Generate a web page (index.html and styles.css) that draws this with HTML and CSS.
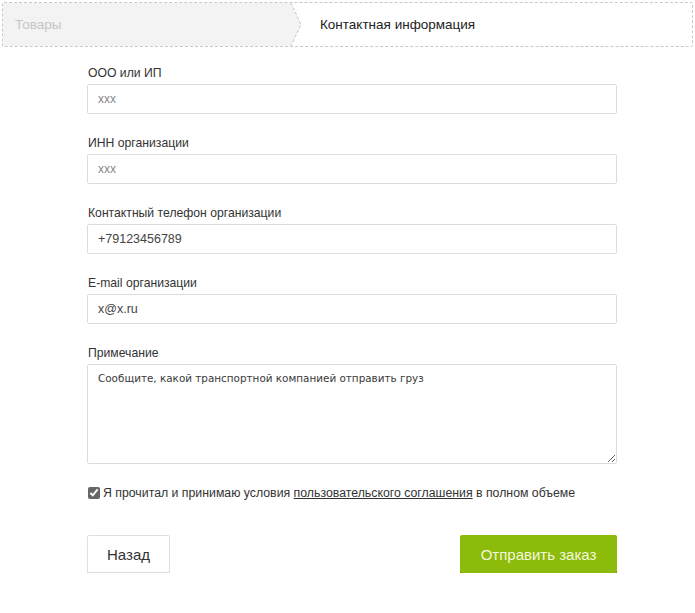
FILE: index.html
```html
<!DOCTYPE html>
<html lang="ru">
<head>
<meta charset="utf-8">
<link rel="stylesheet" href="styles.css">
</head>
<body>
<div class="steps">
  <div class="step step-done">Товары</div>
  <svg class="step-arrow" width="14" height="43" viewBox="0 0 14 43">
    <polygon points="0,0 2,0 12,21.5 2,43 0,43" fill="#f3f3f3"/>
    <polyline points="2,0 12,21.5 2,43" fill="none" stroke="#c4c4c4" stroke-width="1" stroke-dasharray="3,2"/>
  </svg>
  <div class="step step-active">Контактная информация</div>
</div>

<form class="form">
  <div class="field">
    <label class="label">ООО или ИП</label>
    <input class="input input-muted" type="text" value="xxx">
  </div>
  <div class="field">
    <label class="label">ИНН организации</label>
    <input class="input input-muted" type="text" value="xxx">
  </div>
  <div class="field">
    <label class="label">Контактный телефон организации</label>
    <input class="input" type="text" value="+79123456789">
  </div>
  <div class="field">
    <label class="label">E-mail организации</label>
    <input class="input" type="text" value="x@x.ru">
  </div>
  <div class="field">
    <label class="label">Примечание</label>
    <textarea class="textarea">Сообщите, какой транспортной компанией отправить груз</textarea>
  </div>
  <label class="agree">
    <input class="check" type="checkbox" checked>
    <span>Я прочитал и принимаю условия <a class="link" href="#">пользовательского соглашения</a> в полном объеме</span>
  </label>
  <div class="actions">
    <button class="btn btn-back" type="button">Назад</button>
    <button class="btn btn-submit" type="button">Отправить заказ</button>
  </div>
</form>
</body>
</html>
```

FILE: styles.css
```css
* { box-sizing: border-box; }
html, body { background: #fff; }
body {
  margin: 2px;
  font-family: "Liberation Sans", Arial, sans-serif;
  color: #333;
}
.steps {
  display: flex;
  align-items: stretch;
  width: 691px;
  height: 45px;
  border: 1px dashed #c8c8c8;
  border-radius: 2px;
}
.step {
  display: flex;
  align-items: center;
  font-size: 13.5px;
}
.step-done {
  width: 286px;
  background: #f3f3f3;
  color: #c6c6c6;
  padding-left: 12px;
}
.step-arrow { display: block; flex: none; }
.step-active {
  padding-left: 17px;
  color: #222;
}
.form {
  width: 530px;
  margin: 19px 0 0 85px;
}
.field {
  display: flex;
  flex-direction: column;
  margin-bottom: 22px;
}
.label {
  font-size: 12.2px;
  line-height: 14px;
  height: 14px;
  margin-bottom: 4px;
  padding-left: 1px;
  color: #333;
}
.input {
  height: 30px;
  border: 1px solid #dcdcdc;
  border-radius: 2px;
  padding: 0 10px;
  font-family: "Liberation Sans", Arial, sans-serif;
  font-size: 12.5px;
  color: #444;
  outline: none;
}
.input-muted { color: #888; font-size: 12px; }
.textarea {
  height: 100px;
  border: 1px solid #dcdcdc;
  border-radius: 2px;
  padding: 7px 10px;
  font-family: "DejaVu Sans", Verdana, sans-serif;
  font-size: 10.4px;
  color: #3a3a3a;
  resize: vertical;
  outline: none;
}
.agree {
  display: flex;
  align-items: center;
  margin-top: -8px;
  height: 30px;
  font-size: 12.3px;
  color: #333;
}
.check {
  width: 12px;
  height: 12px;
  margin: 0 3px 0 1px;
  accent-color: #666;
}
.link { color: #333; text-decoration: underline; }
.actions {
  display: flex;
  justify-content: space-between;
  margin-top: 27px;
}
.btn {
  height: 38px;
  font-family: "Liberation Sans", Arial, sans-serif;
  font-size: 15px;
  border-radius: 2px;
  cursor: pointer;
}
.btn-back {
  width: 83px;
  background: #fff;
  color: #333;
  border: 1px solid #e0e0e0;
  box-shadow: 0 2px 0 #d6d6d6;
}
.btn-submit {
  width: 157px;
  background: #8dbb0c;
  color: #f2f8dc;
  border: none;
  box-shadow: 0 2px 0 #5f8a06;
}
```
